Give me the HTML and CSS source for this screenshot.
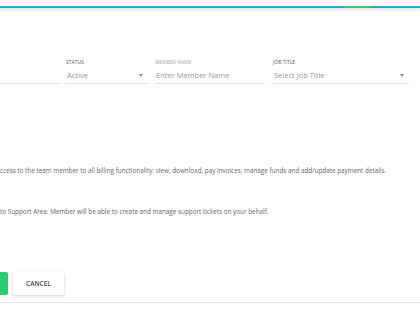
FILE: index.html
```html
<!DOCTYPE html>
<html lang="en">
<head>
  <meta charset="UTF-8">
  <title>Team Member</title>
  <link rel="stylesheet" href="styles.css">
</head>
<body>
  <div class="topbar">
    <span class="topbar-active"></span>
  </div>

  <div class="filters">
    <div class="field">
      <label>&nbsp;</label>
      <div class="control"></div>
    </div>
    <div class="field">
      <label>Status</label>
      <div class="control">Active <span class="caret"></span></div>
    </div>
    <div class="field">
      <label class="muted">Member Name</label>
      <div class="control placeholder">Enter Member Name</div>
    </div>
    <div class="field">
      <label>Job Title</label>
      <div class="control placeholder">Select Job Title <span class="caret"></span></div>
    </div>
  </div>

  <p class="perm perm-billing">ccess to the team member to all billing functionality: view, download, pay invoices, manage funds and add/update payment details.</p>
  <p class="perm perm-support">to Support Area. Member will be able to create and manage support tickets on your behalf.</p>

  <div class="actions">
    <button class="btn btn-save"></button>
    <button class="btn btn-cancel">Cancel</button>
  </div>
</body>
</html>
```
FILE: styles.css
```css
/* General styles */
body {
  margin: 0;
  background: #fff;
  font-family: "Open Sans", "Noto Sans", sans-serif;
  color: #666;
}

.topbar {
  margin-top: 6px;
  height: 2px;
  background: #12b0e8;
  box-shadow: 0 2px 2px rgba(0, 0, 0, 0.12);
  position: relative;
}

.topbar-active {
  position: absolute;
  left: 344px;
  width: 27px;
  top: 0;
  height: 2px;
  background: #2ecc71;
}

/* Filter row */
.filters {
  display: grid;
  grid-template-columns: 59px 82px 110px 137px;
  column-gap: 7px;
  margin-top: 50px;
}

.filters .field:nth-child(4) {
  margin-left: 1px;
}

.field label {
  display: block;
  font-size: 5px;
  line-height: 8px;
  text-transform: uppercase;
  color: #555;
}

.field label.muted {
  color: #aaa;
}

.control {
  position: relative;
  height: 17px;
  line-height: 18px;
  font-size: 7.5px;
  color: #999;
  border-bottom: 1px solid #e2e2e2;
  padding-left: 1px;
}

.caret {
  position: absolute;
  right: 5px;
  top: 8px;
  border-left: 2.5px solid transparent;
  border-right: 2.5px solid transparent;
  border-top: 3px solid #888;
}

/* Permission text */
.perm {
  margin: 0;
  font-size: 6.35px;
  line-height: 10px;
  color: #666;
  white-space: nowrap;
}

.perm-billing {
  margin-top: 82px;
}

.perm-support {
  margin-top: 31px;
}

/* Buttons */
.actions {
  display: flex;
  gap: 5px;
  margin-top: 55px;
  padding-bottom: 7px;
  border-bottom: 1px solid #e6e6e6;
}

.btn {
  height: 23px;
  padding: 0;
  border: 0;
  border-radius: 2px;
  font-family: "Open Sans", sans-serif;
  font-size: 6.5px;
  font-weight: 600;
  text-transform: uppercase;
  cursor: pointer;
}

.btn-save {
  width: 8px;
  background: #2ecc71;
  border-radius: 0 2px 2px 0;
}

.btn-cancel {
  width: 51px;
  background: #fff;
  color: #444;
  box-shadow: 0 1px 3px rgba(0, 0, 0, 0.2);
}
```
